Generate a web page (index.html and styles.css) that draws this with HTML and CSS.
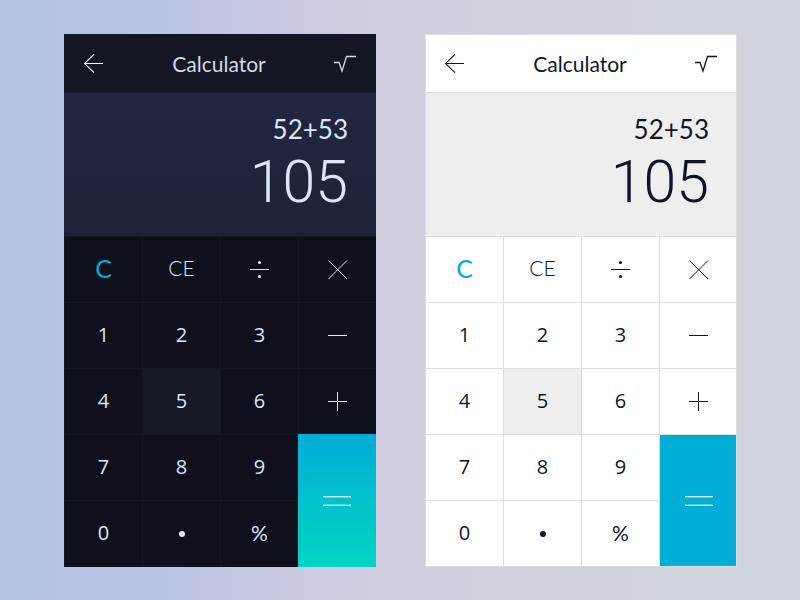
FILE: index.html
```html
<!DOCTYPE html>
<html lang="en">
<head>
<meta charset="utf-8">
<title>Calculator</title>
<meta name="viewport" content="width=device-width, initial-scale=1">
<link rel="stylesheet" href="styles.css">
</head>
<body>
<svg class="sprite" aria-hidden="true">
  <symbol id="back" viewBox="0 0 20 20"><path d="M19 9.500H.5M10 .3.5 9.500l9.500 9.200" stroke-width="1.100"/></symbol>
  <symbol id="root" viewBox="0 0 22 18"><path d="M0 7.500H5l3 8.500L12.500 1.500H22" stroke-width="1.300"/></symbol>
  <symbol id="divide" viewBox="0 0 20 20"><path d="M0 9.500H19"/><g class="dot"><circle cx="9.500" cy="2.500" r="1.600"/><circle cx="9.500" cy="16.500" r="1.600"/></g></symbol>
  <symbol id="times" viewBox="0 0 20 20"><path d="M.5.5l18.500 18.500M19 .5.5 19"/></symbol>
  <symbol id="minus" viewBox="0 0 20 20"><path d="M0 9.500H19"/></symbol>
  <symbol id="plus" viewBox="0 0 20 20"><path d="M0 9.500H19M9.500 0V19"/></symbol>
  <symbol id="point" viewBox="0 0 20 20"><circle class="dot" cx="10" cy="10" r="3"/></symbol>
  <symbol id="equals" viewBox="0 0 28 12"><path d="M0 1.500H28M0 10.500H28"/><path d="M0 2.500H28M0 9.500H28" opacity=".4"/></symbol>
</svg>
<main class="stage">
  <section class="calc dark" aria-label="Dark calculator">
    <header class="bar">
      <button class="tool" aria-label="Back"><svg class="icon"><use href="#back"/></svg></button>
      <h1 class="title">Calculator</h1>
      <button class="tool" aria-label="Square root"><svg class="icon root"><use href="#root"/></svg></button>
    </header>
    <div class="display">
      <div class="expression">52+53</div>
      <output class="result">105</output>
    </div>
    <div class="keys">
      <button class="key text letters clear">C</button>
      <button class="key text letters thin">CE</button>
      <button class="key" aria-label="Divide"><svg class="icon"><use href="#divide"/></svg></button>
      <button class="key" aria-label="Multiply"><svg class="icon"><use href="#times"/></svg></button>
      <button class="key text">1</button>
      <button class="key text">2</button>
      <button class="key text">3</button>
      <button class="key" aria-label="Subtract"><svg class="icon"><use href="#minus"/></svg></button>
      <button class="key text">4</button>
      <button class="key text active">5</button>
      <button class="key text">6</button>
      <button class="key" aria-label="Add"><svg class="icon"><use href="#plus"/></svg></button>
      <button class="key text">7</button>
      <button class="key text">8</button>
      <button class="key text">9</button>
      <button class="key equals" aria-label="Equals"><svg class="icon wide"><use href="#equals"/></svg></button>
      <button class="key text">0</button>
      <button class="key" aria-label="Decimal point"><svg class="icon"><use href="#point"/></svg></button>
      <button class="key text letters">%</button>
    </div>
  </section>
  <section class="calc light" aria-label="Light calculator">
    <header class="bar">
      <button class="tool" aria-label="Back"><svg class="icon"><use href="#back"/></svg></button>
      <h1 class="title">Calculator</h1>
      <button class="tool" aria-label="Square root"><svg class="icon root"><use href="#root"/></svg></button>
    </header>
    <div class="display">
      <div class="expression">52+53</div>
      <output class="result">105</output>
    </div>
    <div class="keys">
      <button class="key text letters clear">C</button>
      <button class="key text letters thin">CE</button>
      <button class="key" aria-label="Divide"><svg class="icon"><use href="#divide"/></svg></button>
      <button class="key" aria-label="Multiply"><svg class="icon"><use href="#times"/></svg></button>
      <button class="key text">1</button>
      <button class="key text">2</button>
      <button class="key text">3</button>
      <button class="key" aria-label="Subtract"><svg class="icon"><use href="#minus"/></svg></button>
      <button class="key text">4</button>
      <button class="key text active">5</button>
      <button class="key text">6</button>
      <button class="key" aria-label="Add"><svg class="icon"><use href="#plus"/></svg></button>
      <button class="key text">7</button>
      <button class="key text">8</button>
      <button class="key text">9</button>
      <button class="key equals" aria-label="Equals"><svg class="icon wide"><use href="#equals"/></svg></button>
      <button class="key text">0</button>
      <button class="key" aria-label="Decimal point"><svg class="icon"><use href="#point"/></svg></button>
      <button class="key text letters">%</button>
    </div>
  </section>
</main>
</body>
</html>
```
FILE: styles.css
```css
* {
  box-sizing: border-box;
}

body {
  margin: 0;
  min-height: 100vh;
  font-family: Lato, "Liberation Sans", sans-serif;
  background: linear-gradient(90deg, #b3c3e3 0%, #b5c4e1 15%, #c4c8e3 30%, #d0cde0 48%, #d0d1de 65%, #d0d4dc 82%, #d0d4dc 100%);
}

button {
  margin: 0;
  padding: 0;
  border: 0;
  background: none;
  color: inherit;
  font: inherit;
  cursor: pointer;
}

.sprite {
  position: absolute;
  width: 0;
  height: 0;
}

.stage {
  display: grid;
  grid-template-columns: 1fr 1fr;
  gap: 49px;
  min-height: 100vh;
  padding: 34px 63px 33px 64px;
}

.calc {
  position: relative;
  display: flex;
  flex-direction: column;
  color: var(--ink);
  background: var(--key);
}

.calc::after {
  content: "";
  position: absolute;
  inset: 0;
  border: 1px solid var(--edge);
  pointer-events: none;
}

.dark {
  --ink: #dbe6f8;
  --title: #d3d9e2;
  --arrow: #ffffff;
  --key: #0e111b;
  --line: #131723;
  --edge: transparent;
  --active: #151925;
  --bar: #131723;
  --bar-line: #131723;
  --display: linear-gradient(#212842, #20243d 50%, #1c2338);
  --equals: linear-gradient(#00add6, #00d5c2);
  --equals-line: #00add6;
}

.light {
  --ink: #101526;
  --title: #101526;
  --arrow: #101526;
  --key: #ffffff;
  --line: #dddddd;
  --edge: #dddddd;
  --active: #eeeeee;
  --bar: #ffffff;
  --bar-line: #dddddd;
  --display: #eeeeee;
  --equals: #00add6;
  --equals-line: #dddddd;
}

.bar {
  display: flex;
  align-items: center;
  justify-content: space-between;
  height: 59px;
  padding: 2px 20px 0;
  color: var(--title);
  background: var(--bar);
  border-bottom: 1px solid var(--bar-line);
}

.tool {
  display: flex;
}

.tool:first-child {
  color: var(--arrow);
}

.title {
  margin: 0;
  font-size: 21px;
  line-height: 24px;
  font-weight: 400;
}

.display {
  height: 143px;
  padding: 20px 28px;
  text-align: right;
  background: var(--display);
}

.expression {
  font-size: 26px;
  line-height: 32px;
}

.result {
  display: block;
  font-family: Roboto, "Liberation Sans", sans-serif;
  font-size: 59px;
  line-height: 74px;
  font-weight: 300;
}

.keys {
  flex: 1;
  display: grid;
  grid-template-columns: repeat(4, 1fr);
  grid-template-rows: repeat(4, 66fr) 67fr;
}

.key {
  display: flex;
  align-items: center;
  justify-content: center;
  border-top: 1px solid var(--line);
  border-left: 1px solid var(--line);
}

.text {
  padding-bottom: 2px;
  font-family: "Open Sans", "Liberation Sans", sans-serif;
  font-size: 20px;
  line-height: 24px;
}

.letters {
  font-family: Lato, "Liberation Sans", sans-serif;
  font-size: 21px;
}

.thin {
  padding-bottom: 4px;
  font-weight: 300;
}

.clear {
  padding-bottom: 4px;
  font-size: 25px;
  color: #00add6;
}

.active {
  background: var(--active);
}

.equals {
  grid-column: 4;
  grid-row: 4 / span 2;
  color: #dbf3fa;
  background: var(--equals);
  border-color: var(--equals-line);
}

.dark .equals {
  border: 0;
}

.icon {
  width: 20px;
  height: 20px;
  fill: none;
  stroke: currentColor;
  stroke-width: 1;
}

.root {
  width: 22px;
  height: 18px;
}

.wide {
  width: 28px;
  height: 12px;
}

.dot {
  fill: currentColor;
  stroke: none;
}
```
